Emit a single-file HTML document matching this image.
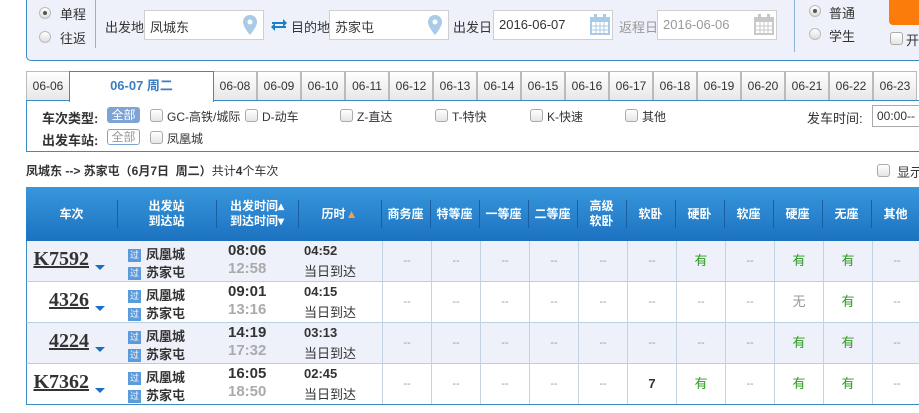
<!DOCTYPE html>
<html><head><meta charset="utf-8"><style>
*{margin:0;padding:0;box-sizing:border-box}
body{width:919px;height:413px;overflow:hidden;background:#fff;font-family:"Liberation Sans","Noto Sans CJK SC",sans-serif;font-size:12px;color:#333;position:relative}
.a{position:absolute;white-space:nowrap}
.top{position:absolute;left:26px;top:-6px;width:910px;height:67px;background:#eef1f9;border:1px solid #3b8cc4;border-radius:5px}
.inp{position:absolute;height:30px;background:#fff;border:1px solid #cfcfcf;font-size:13px;padding:6px 5px;color:#333}
.rad{position:absolute;width:12px;height:12px;border-radius:50%;border:1px solid #bbb;background:linear-gradient(#fff,#ddd)}
.rad.on:after{content:"";position:absolute;left:3px;top:3px;width:4px;height:4px;border-radius:50%;background:#555}
.cb{position:absolute;width:13px;height:13px;border:1px solid #aaa;border-radius:3px;background:linear-gradient(#fff,#e5e5e5)}
.tab{position:absolute;top:71px;height:30px;width:44px;border:1px solid #bbb;border-bottom:none;background:linear-gradient(#fff,#e6e6e6);font-size:12px;text-align:center;line-height:29px;color:#333}
.filt{position:absolute;left:26px;top:100px;width:900px;height:52px;border:1px solid #3b8cc4;border-right:none}
.hd{position:absolute;left:26px;top:187px;width:893px;height:54px;background:linear-gradient(#3897dc,#1c72c0);color:#fff;font-weight:bold;font-size:12px}
.hc{position:absolute;top:0;height:54px;display:flex;align-items:center;justify-content:center;text-align:center;line-height:15px}
.sep{position:absolute;top:13px;width:1px;height:28px;background:#1b5fa0}
.row{position:absolute;left:26px;width:893px;height:41px;border-bottom:1px solid #b9cfe2;border-left:1px solid #3b8cc4}
.c{position:absolute;top:0;height:40px;border-left:1px solid #c3d3e2;text-align:center;line-height:40px;color:#999;font-size:11px}
.g{color:#2a9a1e;font-size:13px}
.tn{position:absolute;font-family:"Liberation Serif",serif;font-weight:bold;font-size:20px;text-decoration:underline;color:#333;text-align:right;width:62px;left:0;top:7px}
.arr{position:absolute;left:68px;top:24px;width:0;height:0;border-left:5px solid transparent;border-right:5px solid transparent;border-top:5px solid #1a6fc4}
.st{position:absolute;left:101px;font-size:13px;font-weight:bold;color:#333}
.ico{display:inline-block;width:13px;height:13px;background:#5b9bdc;color:#fff;font-size:9px;line-height:13px;text-align:center;margin-right:5px;vertical-align:1px;font-weight:normal}
.t1{position:absolute;left:201px;top:1px;font-weight:bold;font-size:15px;color:#333}
.t2{position:absolute;left:201px;top:19px;font-weight:bold;font-size:15px;color:#aaa}
.d1{position:absolute;left:277px;top:2px;font-weight:bold;font-size:13px;color:#333}
.d2{position:absolute;left:277px;top:20px;font-size:13px;color:#333}
</style></head><body>
<div class="top"></div>
<div class="rad on" style="left:39px;top:7px"></div><div class="a" style="left:60px;top:4px;font-size:13px">单程</div>
<div class="rad" style="left:39px;top:31px"></div><div class="a" style="left:60px;top:28px;font-size:13px">往返</div>
<div class="a" style="left:95px;top:0;width:1px;height:48px;background:#8cb4d6"></div>
<div class="a" style="left:105px;top:17px;font-size:13px">出发地</div>
<div class="inp" style="left:144px;top:10px;width:120px">凤城东</div>
<svg class="a" style="left:243px;top:15px" width="14" height="20" viewBox="0 0 14 20"><path d="M7 0C3 0 0 3 0 7c0 5 7 13 7 13s7-8 7-13C14 3 11 0 7 0z" fill="#a9cbe8"/><circle cx="7" cy="7" r="2.5" fill="#fff"/></svg>
<svg class="a" style="left:270px;top:18px" width="18" height="14" viewBox="0 0 18 14"><path d="M2 4h11V1l4 4-4 4V6H2z M16 10H5v3L1 9l4-4v3h11z" fill="#1b7fc4"/></svg>
<div class="a" style="left:291px;top:17px;font-size:13px">目的地</div>
<div class="inp" style="left:329px;top:10px;width:120px">苏家屯</div>
<svg class="a" style="left:428px;top:15px" width="14" height="20" viewBox="0 0 14 20"><path d="M7 0C3 0 0 3 0 7c0 5 7 13 7 13s7-8 7-13C14 3 11 0 7 0z" fill="#a9cbe8"/><circle cx="7" cy="7" r="2.5" fill="#fff"/></svg>
<div class="a" style="left:453px;top:17px;font-size:13px">出发日</div>
<div class="inp" style="left:493px;top:10px;width:120px">2016-06-07</div>
<svg class="a" style="left:590px;top:14px" width="20" height="21" viewBox="0 0 20 21"><rect x="0" y="3" width="20" height="18" fill="#a9cbe8"/><rect x="2" y="8" width="16" height="11" fill="#fff"/><path d="M2 12h16M2 16h16M6 8v11M10 8v11M14 8v11" stroke="#a9cbe8"/><rect x="4" y="0" width="3" height="5" fill="#a9cbe8"/><rect x="13" y="0" width="3" height="5" fill="#a9cbe8"/></svg>
<div class="a" style="left:619px;top:17px;font-size:13px;color:#999">返程日</div>
<div class="inp" style="left:657px;top:10px;width:120px;color:#999">2016-06-06</div>
<svg class="a" style="left:754px;top:14px" width="20" height="21" viewBox="0 0 20 21"><rect x="0" y="3" width="20" height="18" fill="#c8c8c8"/><rect x="2" y="8" width="16" height="11" fill="#fff"/><path d="M2 12h16M2 16h16M6 8v11M10 8v11M14 8v11" stroke="#c8c8c8"/><rect x="4" y="0" width="3" height="5" fill="#c8c8c8"/><rect x="13" y="0" width="3" height="5" fill="#c8c8c8"/></svg>
<div class="a" style="left:794px;top:0;width:1px;height:52px;background:#8cb4d6"></div>
<div class="rad on" style="left:809px;top:5px"></div><div class="a" style="left:829px;top:3px;font-size:13px">普通</div>
<div class="rad" style="left:809px;top:28px"></div><div class="a" style="left:829px;top:26px;font-size:13px">学生</div>
<div class="a" style="left:889px;top:0;width:40px;height:25px;background:#fb7c0a;border-radius:0 0 0 4px"></div>
<div class="cb" style="left:890px;top:32px"></div><div class="a" style="left:906px;top:30px;font-size:13px">开</div>

<div class="a" style="left:26px;top:100px;width:893px;height:1px;background:#3b8cc4"></div>
<div class="tab" style="left:26px">06-06</div>
<div class="a" style="left:69px;top:71px;width:145px;height:31px;background:#fff;border:1px solid #3b8cc4;border-bottom:none;text-align:center;line-height:28px;color:#3a7fc2;font-weight:bold;font-size:13px;z-index:2">06-07 周二</div>
<div class="tab" style="left:213px">06-08</div><div class="tab" style="left:257px">06-09</div><div class="tab" style="left:301px">06-10</div><div class="tab" style="left:345px">06-11</div><div class="tab" style="left:389px">06-12</div><div class="tab" style="left:433px">06-13</div><div class="tab" style="left:477px">06-14</div><div class="tab" style="left:521px">06-15</div><div class="tab" style="left:565px">06-16</div><div class="tab" style="left:609px">06-17</div><div class="tab" style="left:653px">06-18</div><div class="tab" style="left:697px">06-19</div><div class="tab" style="left:741px">06-20</div><div class="tab" style="left:785px">06-21</div><div class="tab" style="left:829px">06-22</div><div class="tab" style="left:873px">06-23</div>
<div class="filt"></div>
<div class="a" style="left:42px;top:108px;font-weight:bold;font-size:13px">车次类型:</div>
<div class="a" style="left:107px;top:107px;width:33px;height:16px;background:#7ea3d6;color:#fff;border-radius:3px;text-align:center;line-height:16px;font-size:12px">全部</div>
<div class="cb" style="left:150px;top:109px"></div><div class="a" style="left:167px;top:108px">GC-高铁/城际</div>
<div class="cb" style="left:245px;top:109px"></div><div class="a" style="left:262px;top:108px">D-动车</div>
<div class="cb" style="left:340px;top:109px"></div><div class="a" style="left:357px;top:108px">Z-直达</div>
<div class="cb" style="left:435px;top:109px"></div><div class="a" style="left:452px;top:108px">T-特快</div>
<div class="cb" style="left:530px;top:109px"></div><div class="a" style="left:547px;top:108px">K-快速</div>
<div class="cb" style="left:625px;top:109px"></div><div class="a" style="left:642px;top:108px">其他</div>
<div class="a" style="left:807px;top:108px;font-size:13px">发车时间:</div>
<div class="a" style="left:872px;top:105px;width:60px;height:22px;border:1px solid #aaa;padding:3px 4px">00:00--</div>
<div class="a" style="left:42px;top:130px;font-weight:bold;font-size:13px">出发车站:</div>
<div class="a" style="left:107px;top:129px;width:33px;height:16px;border:1px solid #7ea3d6;color:#999;border-radius:3px;text-align:center;line-height:14px;font-size:12px">全部</div>
<div class="cb" style="left:150px;top:131px"></div><div class="a" style="left:167px;top:130px">凤凰城</div>

<div class="a" style="left:26px;top:162px;font-size:12px"><b>凤城东 --&gt; 苏家屯（6月7日&nbsp; 周二）</b>共计<b>4</b>个车次</div>
<div class="cb" style="left:877px;top:164px"></div><div class="a" style="left:897px;top:162px;font-size:13px">显示</div>

<div class="hd">
<div class="hc" style="left:0;width:91px">车次</div><div class="sep" style="left:91px"></div>
<div class="hc" style="left:91px;width:99px">出发站<br>到达站</div><div class="sep" style="left:190px"></div>
<div class="hc" style="left:190px;width:82px">出发时间▴<br>到达时间▾</div><div class="sep" style="left:272px"></div>
<div class="hc" style="left:272px;width:83px">历时 <span style="color:#f0a050">▲</span></div><div class="sep" style="left:355px"></div>
<div class="hc" style="left:355px;width:49px">商务座</div><div class="sep" style="left:404px"></div>
<div class="hc" style="left:404px;width:49px">特等座</div><div class="sep" style="left:453px"></div>
<div class="hc" style="left:453px;width:49px">一等座</div><div class="sep" style="left:502px"></div>
<div class="hc" style="left:502px;width:49px">二等座</div><div class="sep" style="left:551px"></div>
<div class="hc" style="left:551px;width:49px">高级<br>软卧</div><div class="sep" style="left:600px"></div>
<div class="hc" style="left:600px;width:49px">软卧</div><div class="sep" style="left:649px"></div>
<div class="hc" style="left:649px;width:49px">硬卧</div><div class="sep" style="left:698px"></div>
<div class="hc" style="left:698px;width:49px">软座</div><div class="sep" style="left:747px"></div>
<div class="hc" style="left:747px;width:49px">硬座</div><div class="sep" style="left:796px"></div>
<div class="hc" style="left:796px;width:49px">无座</div><div class="sep" style="left:845px"></div>
<div class="hc" style="left:845px;width:49px">其他</div>
</div>

<div class="row" style="top:241px;background:#eef1f9">
<div class="tn">K7592</div><div class="arr"></div>
<div class="st" style="top:3px"><span class="ico">过</span>凤凰城</div><div class="st" style="top:21px"><span class="ico">过</span>苏家屯</div>
<div class="t1">08:06</div><div class="t2">12:58</div><div class="d1">04:52</div><div class="d2">当日到达</div>
<div class="c" style="left:355px;width:49px">--</div><div class="c" style="left:404px;width:49px">--</div><div class="c" style="left:453px;width:49px">--</div><div class="c" style="left:502px;width:49px">--</div><div class="c" style="left:551px;width:49px">--</div><div class="c" style="left:600px;width:49px">--</div><div class="c g" style="left:649px;width:49px">有</div><div class="c" style="left:698px;width:49px">--</div><div class="c g" style="left:747px;width:49px">有</div><div class="c g" style="left:796px;width:49px">有</div><div class="c" style="left:845px;width:49px">--</div>
</div>
<div class="row" style="top:282px;background:#fff">
<div class="tn">4326</div><div class="arr"></div>
<div class="st" style="top:3px"><span class="ico">过</span>凤凰城</div><div class="st" style="top:21px"><span class="ico">过</span>苏家屯</div>
<div class="t1">09:01</div><div class="t2">13:16</div><div class="d1">04:15</div><div class="d2">当日到达</div>
<div class="c" style="left:355px;width:49px">--</div><div class="c" style="left:404px;width:49px">--</div><div class="c" style="left:453px;width:49px">--</div><div class="c" style="left:502px;width:49px">--</div><div class="c" style="left:551px;width:49px">--</div><div class="c" style="left:600px;width:49px">--</div><div class="c" style="left:649px;width:49px">--</div><div class="c" style="left:698px;width:49px">--</div><div class="c" style="left:747px;width:49px;font-size:13px">无</div><div class="c g" style="left:796px;width:49px">有</div><div class="c" style="left:845px;width:49px">--</div>
</div>
<div class="row" style="top:323px;background:#eef1f9">
<div class="tn">4224</div><div class="arr"></div>
<div class="st" style="top:3px"><span class="ico">过</span>凤凰城</div><div class="st" style="top:21px"><span class="ico">过</span>苏家屯</div>
<div class="t1">14:19</div><div class="t2">17:32</div><div class="d1">03:13</div><div class="d2">当日到达</div>
<div class="c" style="left:355px;width:49px">--</div><div class="c" style="left:404px;width:49px">--</div><div class="c" style="left:453px;width:49px">--</div><div class="c" style="left:502px;width:49px">--</div><div class="c" style="left:551px;width:49px">--</div><div class="c" style="left:600px;width:49px">--</div><div class="c" style="left:649px;width:49px">--</div><div class="c" style="left:698px;width:49px">--</div><div class="c g" style="left:747px;width:49px">有</div><div class="c g" style="left:796px;width:49px">有</div><div class="c" style="left:845px;width:49px">--</div>
</div>
<div class="row" style="top:364px;background:#fff;border-bottom:1px solid #3b8cc4">
<div class="tn">K7362</div><div class="arr"></div>
<div class="st" style="top:3px"><span class="ico">过</span>凤凰城</div><div class="st" style="top:21px"><span class="ico">过</span>苏家屯</div>
<div class="t1">16:05</div><div class="t2">18:50</div><div class="d1">02:45</div><div class="d2">当日到达</div>
<div class="c" style="left:355px;width:49px">--</div><div class="c" style="left:404px;width:49px">--</div><div class="c" style="left:453px;width:49px">--</div><div class="c" style="left:502px;width:49px">--</div><div class="c" style="left:551px;width:49px">--</div><div class="c" style="left:600px;width:49px;color:#333;font-weight:bold;font-size:13px">7</div><div class="c g" style="left:649px;width:49px">有</div><div class="c" style="left:698px;width:49px">--</div><div class="c g" style="left:747px;width:49px">有</div><div class="c g" style="left:796px;width:49px">有</div><div class="c" style="left:845px;width:49px">--</div>
</div>
</body></html>
